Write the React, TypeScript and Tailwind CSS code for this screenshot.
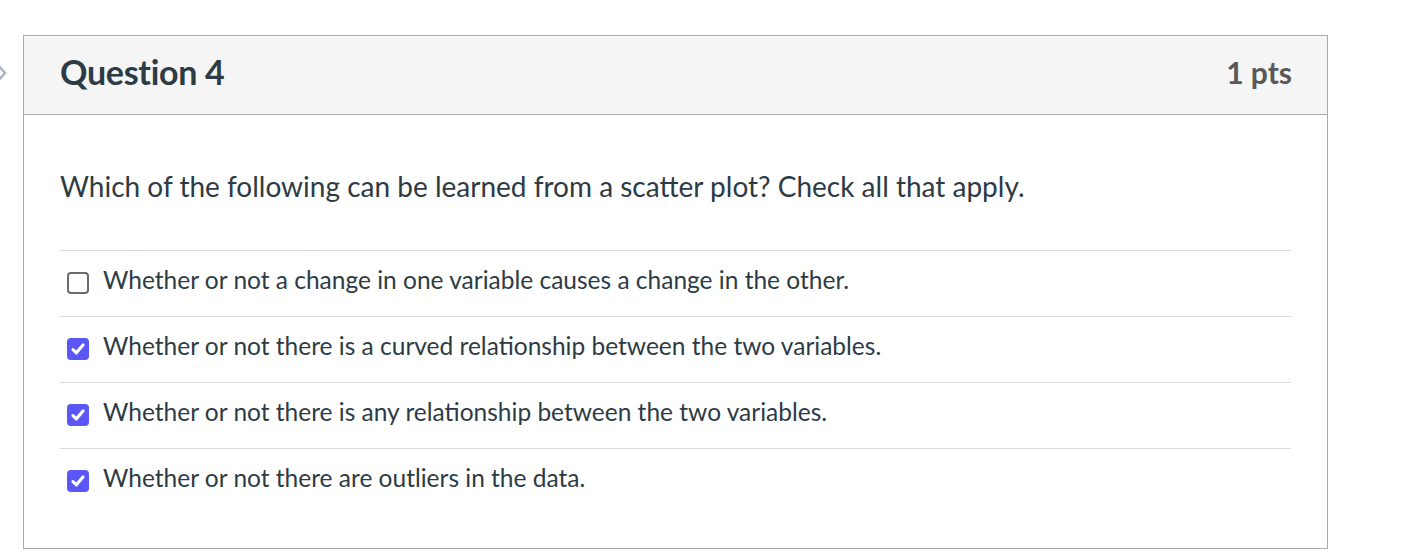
import React from "react";

const answers = [
  { text: "Whether or not a change in one variable causes a change in the other.", checked: false },
  { text: "Whether or not there is a curved relationship between the two variables.", checked: true },
  { text: "Whether or not there is any relationship between the two variables.", checked: true },
  { text: "Whether or not there are outliers in the data.", checked: true },
];

function Box({ checked }: { checked: boolean }) {
  if (!checked) {
    return <span className="block w-[22px] h-[22px] rounded-[4px] border-2 border-[#6b6b6b] bg-white shrink-0 -mt-[2px]" />;
  }
  return (
    <span className="flex items-center justify-center w-[22px] h-[22px] rounded-[4px] bg-[#5b57f6] shrink-0 -mt-[2px]">
      <svg width="16" height="16" viewBox="0 0 16 16">
        <path d="M3 8.6 L6.4 11.8 L13 4" fill="none" stroke="white" strokeWidth="3.2" strokeLinecap="round" strokeLinejoin="round" />
      </svg>
    </span>
  );
}

export default function App() {
  return (
    <div className="relative w-[1425px] h-[558px] bg-white overflow-hidden" style={{ fontFamily: "Lato, 'Open Sans', sans-serif" }}>
      <svg className="absolute left-[-6px] top-[62px]" width="14" height="22" viewBox="0 0 14 22">
        <path d="M3 2 L11 11 L3 20" fill="none" stroke="#a9b3c1" strokeWidth="2.4" />
      </svg>
      <div className="pt-[35px] pl-[23px]">
        <div className="w-[1305px] h-[514px] border border-[#aaaaaa] flex flex-col">
          <div className="h-[79px] bg-[#f5f5f5] border-b border-[#aaaaaa] flex items-center justify-between pl-[36px] pr-[35px]">
            <span className="text-[34px] font-bold text-[#2d3b45] tracking-[-0.3px] -mt-[7px]">Question 4</span>
            <span className="text-[30px] font-bold text-[#56585a] -mt-[6px]">1 pts</span>
          </div>
          <div className="px-[36px] pt-[52px]">
            <p className="text-[28px] leading-[38px] text-[#2d3b45] mb-[45px]">
              Which of the following can be learned from a scatter plot? Check all that apply.
            </p>
            <div>
              {answers.map((a, i) => (
                <div key={i} className="h-[66px] border-t border-[#dcdcdc] flex items-center pl-[7px] gap-[14px]">
                  <Box checked={a.checked} />
                  <span className="text-[24.5px] text-[#2d3b45] -mt-[6px]">{a.text}</span>
                </div>
              ))}
            </div>
          </div>
        </div>
      </div>
    </div>
  );
}
